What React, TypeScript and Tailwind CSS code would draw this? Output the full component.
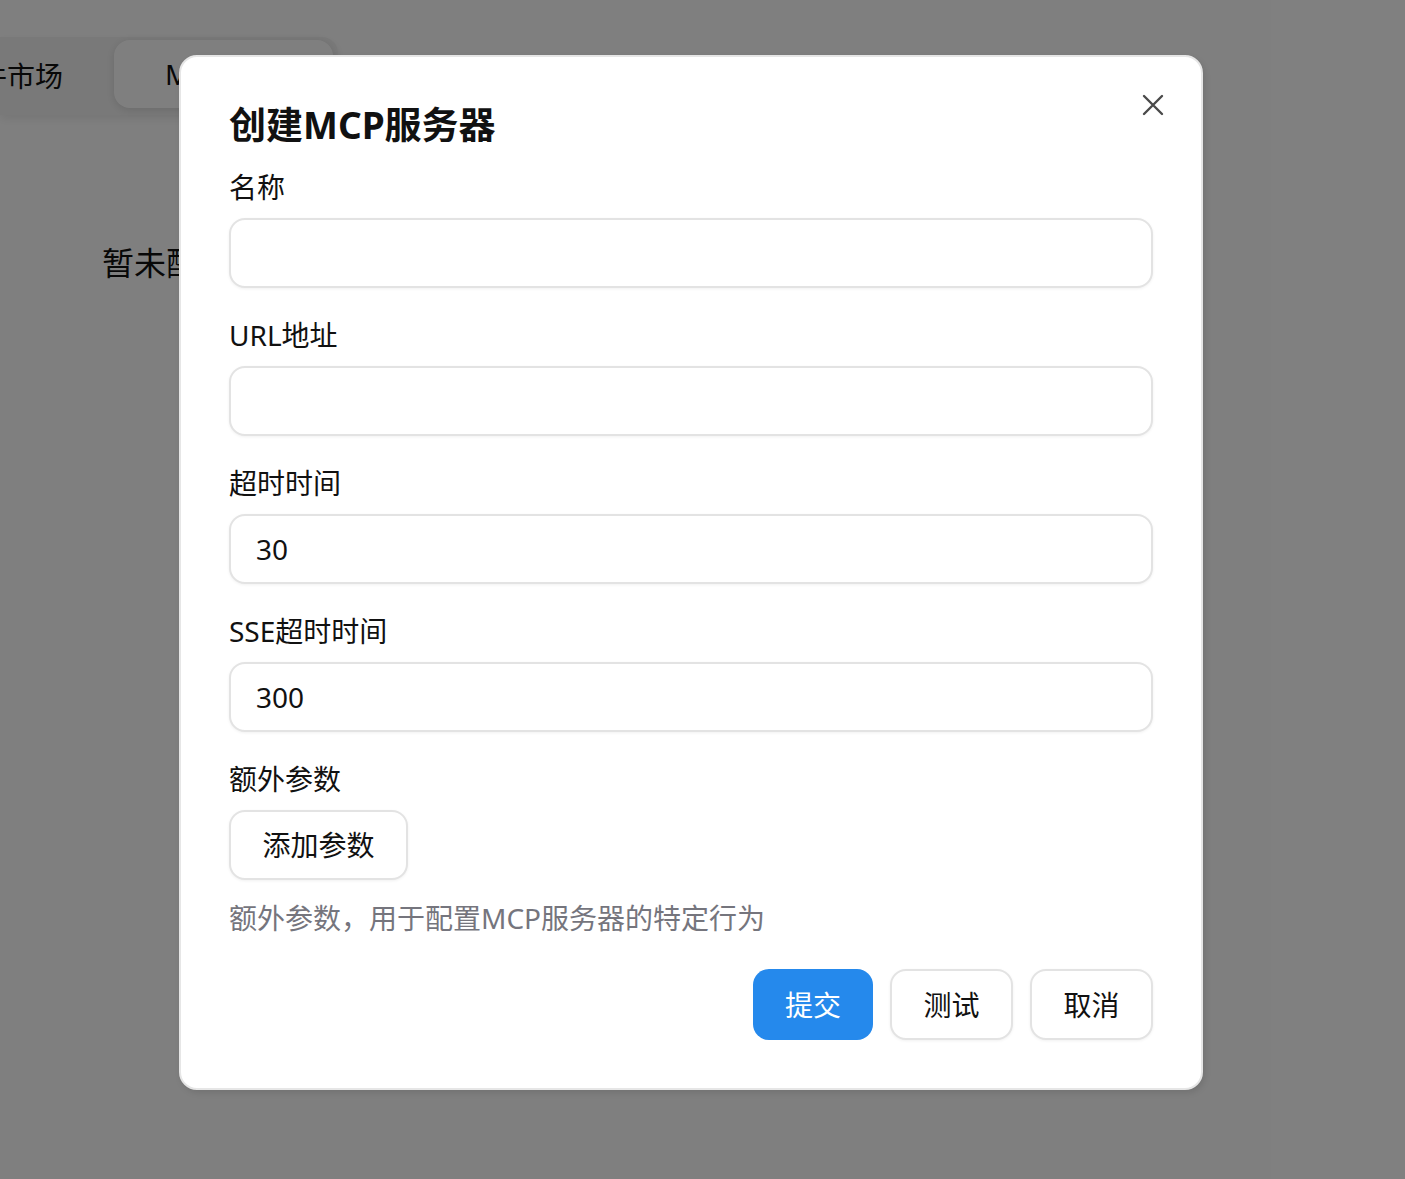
import React from "react";

const font = { fontFamily: '"Noto Sans", "Noto Sans CJK SC", sans-serif' };

function Field({ label, value }: { label: string; value?: string }) {
  return (
    <div className="flex flex-col">
      <label className="text-[28px] leading-[42px] text-[#111]">{label}</label>
      <div className="mt-[10px] h-[70px] rounded-[16px] border-2 border-[#e3e3e3] bg-white shadow-[0_1px_3px_rgba(0,0,0,0.06)] flex items-center px-[25px] text-[28px] text-[#111]">
        {value ?? ""}
      </div>
    </div>
  );
}

export default function App() {
  return (
    <div className="relative w-[1405px] h-[1179px] overflow-hidden bg-white" style={font}>
      {/* background page */}
      <div className="pt-[37px]">
        <div className="h-[78px] w-[338px] rounded-r-[16px] bg-[#f3f3f3] shadow-[0_4px_10px_rgba(0,0,0,0.08)] flex items-center">
          <div className="ml-[-49px] text-[28px] text-[#111] w-[112px] leading-[42px] whitespace-nowrap">插件市场</div>
          <div className="ml-[51px] h-[68px] w-[219px] rounded-[16px] bg-white shadow-[0_2px_10px_rgba(0,0,0,0.12)] flex items-center pl-[51px] text-[28px] text-[#111] -mt-[4px]">
            MCP服务器
          </div>
        </div>
        <div className="mt-[124px] pl-[102px] text-[32px] leading-[48px] text-[#111]">暂未配置MCP服务器</div>
      </div>

      {/* overlay */}
      <div className="absolute inset-0 bg-black/50" />

      {/* dialog */}
      <div className="absolute left-[179px] top-[55px] w-[1024px] rounded-[18px] border-2 border-[#e6e6e6] bg-white shadow-[2px_3px_6px_rgba(0,0,0,0.1)] px-[48px] pt-[41px] pb-[48px]">
        <button className="absolute right-[34px] top-[34px] w-[28px] h-[28px] flex items-center justify-center">
          <svg width="22" height="22" viewBox="0 0 22 22" fill="none" stroke="#4a4a4a" strokeWidth="2.4" strokeLinecap="round">
            <path d="M2 2L20 20M20 2L2 20" />
          </svg>
        </button>
        <h2 className="text-[37px] leading-[54px] font-bold text-[#111]">创建MCP服务器</h2>
        <div className="mt-[14px] flex flex-col gap-[26px]">
          <Field label="名称" />
          <Field label="URL地址" />
          <Field label="超时时间" value="30" />
          <Field label="SSE超时时间" value="300" />
          <div className="flex flex-col">
            <label className="text-[28px] leading-[42px] text-[#111]">额外参数</label>
            <div className="mt-[10px]">
              <button className="h-[70px] w-[179px] rounded-[16px] border-2 border-[#e3e3e3] bg-white shadow-[0_1px_3px_rgba(0,0,0,0.06)] text-[28px] text-[#111]">
                添加参数
              </button>
            </div>
          </div>
        </div>
        <p className="mt-[17px] text-[28px] leading-[42px] text-[#75757d]">额外参数，用于配置MCP服务器的特定行为</p>
        <div className="mt-[30px] flex justify-end gap-[17px]">
          <button className="h-[71px] w-[120px] rounded-[16px] bg-[#2589ec] text-white text-[28px]">提交</button>
          <button className="h-[71px] w-[123px] rounded-[16px] border-2 border-[#e3e3e3] bg-white shadow-[0_1px_3px_rgba(0,0,0,0.06)] text-[28px] text-[#111]">测试</button>
          <button className="h-[71px] w-[123px] rounded-[16px] border-2 border-[#e3e3e3] bg-white shadow-[0_1px_3px_rgba(0,0,0,0.06)] text-[28px] text-[#111]">取消</button>
        </div>
      </div>
    </div>
  );
}
